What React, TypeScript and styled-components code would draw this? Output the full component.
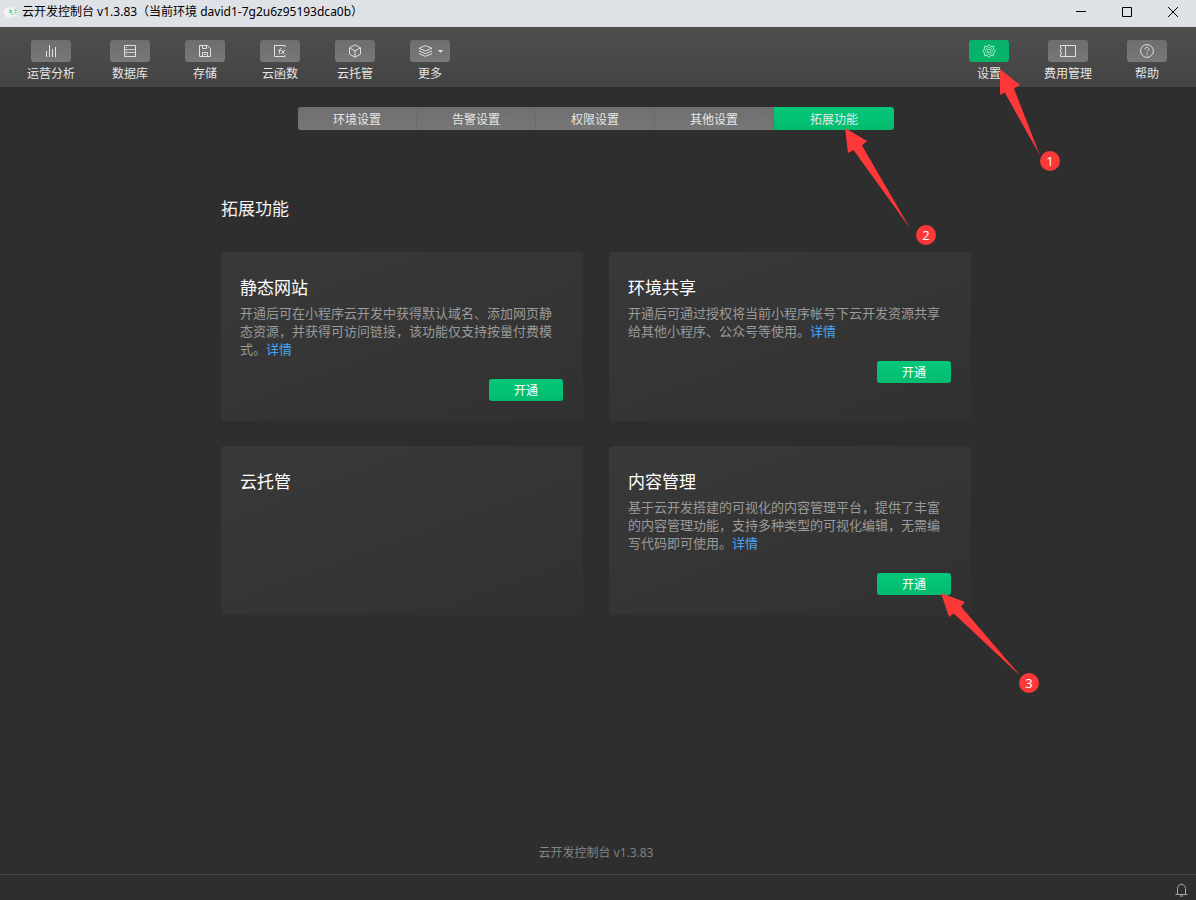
import React from "react";
import styled, { createGlobalStyle, css } from "styled-components";

const GlobalStyle = createGlobalStyle`
  *, *::before, *::after { box-sizing: border-box; }
  body {
    margin: 0;
    background: #2e2e2e;
    font-family: "Open Sans", "Noto Sans CJK SC", sans-serif;
    font-size: 12px;
    line-height: 18px;
  }
  button { font: inherit; border: 0; padding: 0; cursor: pointer; }
  h1, h2, p { margin: 0; font-weight: 400; }
`;

const Window = styled.div`
  display: flex;
  flex-direction: column;
  min-height: 100vh;
  overflow-x: hidden;
  background: #2e2e2e;
`;

const TitleBar = styled.header`
  display: flex;
  align-items: center;
  height: 27px;
  padding-left: 3px;
  background: #dee1e6;
  color: #000;
`;

const WindowTitle = styled.span`
  flex: 1;
  margin-left: 3px;
  padding-bottom: 3px;
  font-family: "Noto Sans", "Noto Sans CJK SC", sans-serif;
  white-space: nowrap;
`;

const WindowControl = styled.button`
  display: flex;
  align-items: center;
  justify-content: center;
  width: 46px;
  height: 27px;
  padding-bottom: 4px;
  background: transparent;
  color: #000;
`;

const Toolbar = styled.nav`
  display: flex;
  justify-content: space-between;
  height: 60px;
  padding: 13px 29px 0 27px;
  background: linear-gradient(#4f4f4f, #434343);
`;

const ToolGroup = styled.div`
  display: flex;
  gap: 35px;
`;

const ToolSlot = styled.div`
  position: relative;
`;

const ToolItem = styled.button`
  display: flex;
  flex-direction: column;
  align-items: center;
  gap: 3px;
  background: transparent;
  color: #e6e6e6;
  white-space: nowrap;
`;

const ToolIcon = styled.span<{ $active?: boolean }>`
  display: flex;
  align-items: center;
  justify-content: center;
  gap: 5px;
  width: 40px;
  height: 22px;
  border-radius: 3px;
  color: ${(p) => (p.$active ? "#a5ecc9" : "#e0e0e0")};
  background: ${(p) => (p.$active ? "#07b368" : "linear-gradient(#6e6e6e, #787878)")};
`;

const Main = styled.main`
  flex: 1;
  display: flex;
  flex-direction: column;
  align-items: center;
  padding: 20px 4px 0 0;
`;

const Tabs = styled.div`
  display: flex;
  width: 596px;
  max-width: 100%;
  height: 23px;
`;

const TabSlot = styled.div`
  position: relative;
  flex: 0 1 119px;
  &:first-child > button { border-radius: 3px 0 0 3px; }
  &:last-child { flex-grow: 1; }
  &:last-child > button { border-radius: 0 3px 3px 0; border-right: 0; }
`;

const greenFill = css`
  background: linear-gradient(#04c87a, #04bb6e);
`;

const Tab = styled.button<{ $active?: boolean }>`
  width: 100%;
  height: 23px;
  padding-top: 2px;
  color: #e8e8e8;
  border-right: 1px solid #6c6c6c;
  background: linear-gradient(#6e6e6e, #777777);
  ${(p) => p.$active && greenFill}
`;

const Section = styled.section`
  width: 750px;
  max-width: 100%;
  margin-top: 66px;
`;

const SectionTitle = styled.h1`
  font-size: 17px;
  line-height: 26px;
  color: #f2f2f2;
`;

const CardGrid = styled.div`
  display: grid;
  grid-template-columns: 1fr 1fr;
  gap: 25px 26px;
  margin-top: 30px;
`;

const Card = styled.article`
  display: flex;
  flex-direction: column;
  min-height: 169px;
  padding: 23px 20px 20px 19px;
  border-radius: 4px;
  background: linear-gradient(160deg, #393939, #313131);
`;

const CardTitle = styled.h2`
  font-size: 17px;
  line-height: 26px;
  color: #fff;
`;

const CardText = styled.p`
  margin-top: 3px;
  font-size: 13px;
  line-height: 18px;
  color: #9a9a9a;
`;

const DetailLink = styled.a`
  color: #45a5f5;
  text-decoration: none;
`;

const ActionSlot = styled.div`
  position: relative;
  align-self: flex-end;
  margin-top: 21px;
`;

const ActionButton = styled.button`
  display: block;
  width: 74px;
  height: 22px;
  padding-top: 2px;
  border-radius: 3px;
  color: #fff;
  ${greenFill}
`;

const Version = styled.footer`
  margin-top: auto;
  padding: 40px 0 12px;
  color: #858585;
`;

const StatusBar = styled.div`
  display: flex;
  align-items: center;
  justify-content: flex-end;
  height: 26px;
  padding: 4px 8px 0 0;
  border-top: 1px solid #444;
  color: #a8a8a8;
`;

const StatusButton = styled.button`
  display: flex;
  background: transparent;
  color: inherit;
`;

const Callout = styled.div<{ $x: number; $y: number }>`
  position: absolute;
  z-index: 2;
  left: ${(p) => p.$x}px;
  top: ${(p) => p.$y}px;
  pointer-events: none;
  svg { display: block; fill: #fd3838; }
`;

const Badge = styled.span<{ $x: number; $y: number }>`
  position: absolute;
  left: ${(p) => p.$x}px;
  top: ${(p) => p.$y}px;
  width: 20px;
  height: 20px;
  border-radius: 50%;
  background: #fd3838;
  color: #fff;
  font-size: 13px;
  line-height: 20px;
  text-align: center;
`;

const stroke = { fill: "none", stroke: "currentColor", strokeWidth: 1 } as const;

const AppLogo = () => (
  <svg width="16" height="16" viewBox="2 0 16 16">
    <path d="M9 1C5.100 1 2.400 3.300 2.400 6.300c0 1.800 1 3.300 2.600 4.300l-.5 2 2.300-1.200c4 1 9.800-.6 10.100-4.800C17.100 3 13.500 1 9 1z" fill="#f3f3f3" stroke="#e4e6e8" />
    <path d="M8.500 4l2 1.500-2 1.500M10.500 8h2M13.500 4.200h2M14 6.700h1.500" fill="none" stroke="#2fc27c" strokeWidth="1.200" />
  </svg>
);

const ChartIcon = () => (
  <svg width="12" height="12" viewBox="0 0 12 12" {...stroke}>
    <path d="M1.500 6v6M4.500 0v12M7.500 4v8M10.500 2v10" />
  </svg>
);
const DatabaseIcon = () => (
  <svg width="12" height="12" viewBox="0 0 12 12" {...stroke}>
    <path d="M.5.5h11v11H.5z" />
    <path d="M.5 4.500h11M.5 7.500h11M2 2.500h1M2 6h1M2 9.500h1" strokeOpacity=".8" />
  </svg>
);
const SaveIcon = () => (
  <svg width="12" height="12" viewBox="0 0 12 12" {...stroke}>
    <path d="M.5.5h8l3 3v8H.5zM3.500.5v3h4v-3M3.500 11.500v-4h5v4M5 9.500h2" />
  </svg>
);
const FunctionIcon = () => (
  <svg width="12" height="12" viewBox="0 0 12 12" {...stroke}>
    <path d="M11 2V.5H.5v11H11V10" />
    <path d="M7.500 3.500c-1-.5-1.500.2-1.700 1.300L5 9M4.500 5.500H7M7.700 5l2.800 4M11 5L7 9" />
  </svg>
);
const CubeIcon = () => (
  <svg width="14" height="14" viewBox="0 0 14 14" {...stroke}>
    <path d="M7 .8l5.500 3v6.400L7 13.200l-5.500-3V3.800zM1.500 3.800L7 7l5.500-3.200M7 7v6.200" />
  </svg>
);
const LayersIcon = () => (
  <svg width="15" height="12" viewBox="0 0 15 12" {...stroke}>
    <path d="M7.500.6L14 3.300 7.500 6 1 3.300zM1 6l6.500 2.700L14 6M1 8.600l6.500 2.700L14 8.600" />
  </svg>
);
const CaretIcon = () => (
  <svg width="5" height="3" viewBox="0 0 5 3">
    <path d="M0 0h5L2.500 3z" fill="currentColor" />
  </svg>
);
const GearIcon = () => (
  <svg width="14" height="14" viewBox="0 0 14 14" {...stroke} strokeLinejoin="round">
    <path d="M7 .6l1.600 1.900 2.900-.3.100 2.700L13.400 7l-1.800 2.100-.1 2.700-2.900-.3L7 13.400l-1.600-1.900-2.900.3-.1-2.700L.6 7l1.800-2.100.1-2.700 2.900.3z" />
    <path d="M5 3.600h4L11 7 9 10.400H5L3 7z" strokeOpacity=".6" />
    <circle cx="7" cy="7" r="1.800" />
  </svg>
);
const TicketIcon = () => (
  <svg width="16" height="12" viewBox="0 0 16 12" {...stroke}>
    <path d="M.5.500h15v11H.5V9.300l1.500-.8-1.500-1V4.500l1.500-1-1.500-.8zM5.500.5v11" />
  </svg>
);
const HelpIcon = () => (
  <svg width="14" height="14" viewBox="0 0 14 14" {...stroke}>
    <circle cx="7" cy="7" r="6.400" />
    <path d="M5 5.500c0-1.400.8-2.100 2-2.100s2 .8 2 1.800c0 1.500-2 1.600-2 3.200M7 9.600v1.200" />
  </svg>
);
const BellIcon = () => (
  <svg width="13" height="14" viewBox="0 0 13 14" {...stroke}>
    <path d="M6.500.5v1M2.500 11V5.500c0-2.500 1.500-4 4-4s4 1.500 4 4V11M.5 11.500h12M5 13h3" />
  </svg>
);

type Tool = { label: string; icon: React.ReactNode };

const tools: Tool[] = [
  { label: "运营分析", icon: <ChartIcon /> },
  { label: "数据库", icon: <DatabaseIcon /> },
  { label: "存储", icon: <SaveIcon /> },
  { label: "云函数", icon: <FunctionIcon /> },
  { label: "云托管", icon: <CubeIcon /> },
  { label: "更多", icon: <><LayersIcon /><CaretIcon /></> },
];

const tabs = ["环境设置", "告警设置", "权限设置", "其他设置", "拓展功能"];

const features = [
  { title: "静态网站", text: "开通后可在小程序云开发中获得默认域名、添加网页静态资源，并获得可访问链接，该功能仅支持按量付费模式。" },
  { title: "环境共享", text: "开通后可通过授权将当前小程序帐号下云开发资源共享给其他小程序、公众号等使用。" },
  { title: "云托管" },
  { title: "内容管理", text: "基于云开发搭建的可视化的内容管理平台，提供了丰富的内容管理功能，支持多种类型的可视化编辑，无需编写代码即可使用。" },
];

const SettingsCallout = () => (
  <Callout $x={31} $y={29}>
    <svg width="40" height="87"><path d="M0 0l20 16-6 3.500L40 86.500 4.700 23.500 0 26z" /></svg>
    <Badge $x={40} $y={82}>1</Badge>
  </Callout>
);
const TabCallout = () => (
  <Callout $x={71} $y={21}>
    <svg width="66" height="102"><path d="M0 0l22 13-5 4.500L65.500 101 8.500 22 3 25z" /></svg>
    <Badge $x={71} $y={97}>2</Badge>
  </Callout>
);
const ActionCallout = () => (
  <Callout $x={64} $y={20}>
    <svg width="81" height="84"><path d="M0 0l24 9-4 4.500L80 83.500 12.700 20.500 8 24z" /></svg>
    <Badge $x={78} $y={80}>3</Badge>
  </Callout>
);

export default function App() {
  return (
    <Window>
      <GlobalStyle />
      <TitleBar>
        <AppLogo />
        <WindowTitle>云开发控制台 v1.3.83（当前环境 david1-7g2u6z95193dca0b）</WindowTitle>
        <WindowControl aria-label="最小化">
          <svg width="10" height="11" {...stroke}><path d="M0 5.500h10" /></svg>
        </WindowControl>
        <WindowControl aria-label="最大化">
          <svg width="10" height="10" {...stroke}><path d="M.5.5h9v9h-9z" /></svg>
        </WindowControl>
        <WindowControl aria-label="关闭">
          <svg width="10" height="10" {...stroke}><path d="M0 0l10 10M10 0L0 10" /></svg>
        </WindowControl>
      </TitleBar>
      <Toolbar>
        <ToolGroup>
          {tools.map((t) => (
            <ToolSlot key={t.label}>
              <ToolItem><ToolIcon>{t.icon}</ToolIcon>{t.label}</ToolItem>
            </ToolSlot>
          ))}
        </ToolGroup>
        <ToolGroup>
          <ToolSlot>
            <ToolItem><ToolIcon $active><GearIcon /></ToolIcon>设置</ToolItem>
            <SettingsCallout />
          </ToolSlot>
          <ToolSlot>
            <ToolItem><ToolIcon><TicketIcon /></ToolIcon>费用管理</ToolItem>
          </ToolSlot>
          <ToolSlot>
            <ToolItem><ToolIcon><HelpIcon /></ToolIcon>帮助</ToolItem>
          </ToolSlot>
        </ToolGroup>
      </Toolbar>
      <Main>
        <Tabs role="tablist">
          {tabs.map((label, i) => {
            const active = i === tabs.length - 1;
            return (
              <TabSlot key={label} role="presentation">
                <Tab role="tab" aria-selected={active} $active={active}>{label}</Tab>
                {active && <TabCallout />}
              </TabSlot>
            );
          })}
        </Tabs>
        <Section>
          <SectionTitle>拓展功能</SectionTitle>
          <CardGrid>
            {features.map((f, i) => (
              <Card key={f.title}>
                <CardTitle>{f.title}</CardTitle>
                {f.text && (
                  <>
                    <CardText>{f.text}<DetailLink href="#">详情</DetailLink></CardText>
                    <ActionSlot>
                      <ActionButton>开通</ActionButton>
                      {i === features.length - 1 && <ActionCallout />}
                    </ActionSlot>
                  </>
                )}
              </Card>
            ))}
          </CardGrid>
        </Section>
        <Version>云开发控制台 v1.3.83</Version>
      </Main>
      <StatusBar>
        <StatusButton aria-label="通知"><BellIcon /></StatusButton>
      </StatusBar>
    </Window>
  );
}
